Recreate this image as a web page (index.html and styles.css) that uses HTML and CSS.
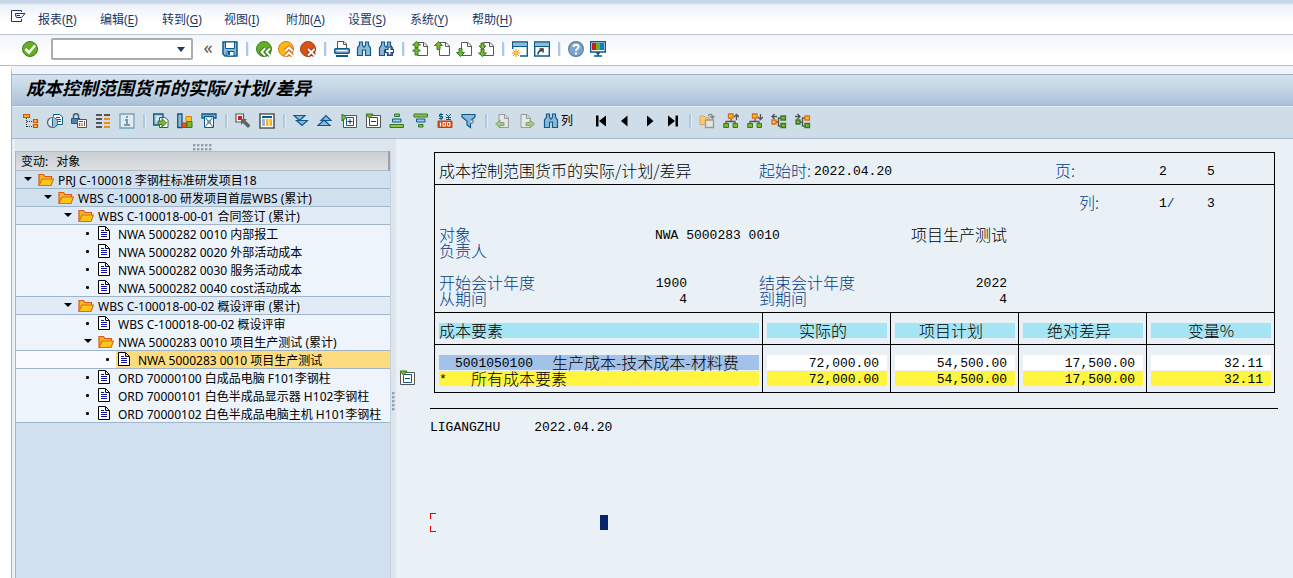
FILE: index.html
```html
<!DOCTYPE html>
<html lang="zh-CN">
<head>
<meta charset="utf-8">
<title>成本控制范围货币的实际/计划/差异</title>
<link rel="stylesheet" href="styles.css">
</head>
<body>
<svg class="sprite" aria-hidden="true">
  <symbol id="i-menu" viewBox="0 0 16 16"><path d="M11.500 3V1.500H1.500V12.500H11.500V10M5.500 4.500H15L11.500 8.500H6.500L5.500 6.500ZM6.500 6.500H10" fill="none" stroke="#1c3667"/></symbol>
  <symbol id="i-ok" viewBox="0 0 16 16"><circle cx="8" cy="8" r="7.500" fill="#69ae22" stroke="#35802a"/><path d="M3.500 8L7 11.500L13 4.500" fill="none" stroke="#fff" stroke-width="2.500"/></symbol>
  <symbol id="i-save" viewBox="0 0 16 16"><path d="M1 1H15V15H3L1 13Z" fill="#8db8da" stroke="#0b5a8c" stroke-width="1.500"/><path d="M3.500 1H12.500V7.500H3.500Z" fill="#fff" stroke="#0b5a8c"/><path d="M5 10.500H12V15H5Z" fill="#fff" stroke="#0b5a8c"/><path d="M6 11H8V14H6Z" fill="#0b5a8c"/></symbol>
  <symbol id="i-back" viewBox="0 0 16 16"><circle cx="8" cy="8" r="7.500" fill="#69ae22" stroke="#35802a"/><path d="M9 7.500L5.500 11L9 14.500M14 7.500L10.500 11L14 14.500" fill="none" stroke="#3b7a25" stroke-width="4"/><path d="M9 7.500L5.500 11L9 14.500M14 7.500L10.500 11L14 14.500" fill="none" stroke="#fff" stroke-width="2"/></symbol>
  <symbol id="i-up" viewBox="0 0 16 16"><circle cx="8" cy="8" r="7.500" fill="#fdb913" stroke="#e07a10"/><path d="M7.500 10L11 6.500L14.500 10M7.500 15L11 11.500L14.500 15" fill="none" stroke="#d9661a" stroke-width="4"/><path d="M7.500 10L11 6.500L14.500 10M7.500 15L11 11.500L14.500 15" fill="none" stroke="#fff" stroke-width="2"/></symbol>
  <symbol id="i-cancel" viewBox="0 0 16 16"><circle cx="8" cy="8" r="7.500" fill="#d8531a" stroke="#b23a15"/><path d="M8 8L14.500 14.500M14.500 8L8 14.500" stroke="#a33414" stroke-width="4"/><path d="M8 8L14.500 14.500M14.500 8L8 14.500" stroke="#fff" stroke-width="2"/></symbol>
  <symbol id="i-print" viewBox="0 0 16 16"><path d="M3.500 7.500V.500H10L12.500 3V7.500M9.500 1V3.500H12" fill="#fff" stroke="#555"/><rect x=".7" y="7.700" width="14.600" height="4.600" rx="1" fill="#9cc1df" stroke="#0b5a8c" stroke-width="1.400"/><path d="M3 9.500H13" stroke="#fff"/><path d="M2 15H14" stroke="#0b5a8c" stroke-width="2"/></symbol>
  <symbol id="i-find" viewBox="0 0 16 16"><path d="M3.500 1H6.500V4L7.500 6H8.500L9.500 4V1H12.500V4L14.500 7V14.500H9.500V9H6.500V14.500H1.500V7L3.500 4Z" fill="#8db8da" stroke="#0b5a8c" stroke-width="1.200"/></symbol>
  <symbol id="i-findnext" viewBox="0 0 16 16"><use href="#i-find"/><path d="M10 6H13V8.500H15.500V11.500H13V14H10V11.500H7.500V8.500H10Z" fill="#fff" stroke="#243e82" stroke-width="1.200"/></symbol>
  <symbol id="page" viewBox="0 0 16 16"><path d="M5.500 1.500H12L15.500 5V14.500H5.500ZM11.500 2V5.500H15" fill="#fff" stroke="#5a5a5a"/></symbol>
  <symbol id="i-first" viewBox="0 0 16 16"><use href="#page"/><path d="M4.500 .5L8.500 4H6V7H3V4H.500ZM4.500 6.500L8.500 10H6V14H3V10H.500Z" fill="#7cb82a" stroke="#34792d"/></symbol>
  <symbol id="i-prev" viewBox="0 0 16 16"><use href="#page"/><path d="M4.500 .5L8.500 4.500H6V8.500H3V4.500H.500Z" fill="#7cb82a" stroke="#34792d"/></symbol>
  <symbol id="i-next" viewBox="0 0 16 16"><use href="#page"/><path d="M4.500 15.500L8.500 11.500H6V7.500H3V11.500H.500Z" fill="#7cb82a" stroke="#34792d"/></symbol>
  <symbol id="i-last" viewBox="0 0 16 16"><use href="#page"/><path d="M4.500 8.500L8 5H6V2H3V5H1ZM4.500 15.500L8.500 12H6V8H3V12H.500Z" fill="#7cb82a" stroke="#34792d"/></symbol>
  <symbol id="i-session" viewBox="0 0 16 16"><path d="M.700 8V1H15.300V15H8" fill="#fff" stroke="#0b5a8c" stroke-width="1.400"/><path d="M1 2H15V5H1Z" fill="#8db8da"/><path d="M1 5.500H15" stroke="#0b5a8c"/><path d="M4 8V16M0 12H8M1 9L7 15M7 9L1 15" stroke="#f28c13"/><circle cx="4" cy="12" r="2" fill="#fdc51c"/></symbol>
  <symbol id="i-shortcut" viewBox="0 0 16 16"><path d="M.700 1H15.300V15H.700Z" fill="#fff" stroke="#0b5a8c" stroke-width="1.400"/><path d="M1.500 2H14.500V5H1.500Z" fill="#8db8da"/><path d="M1 5.500H15" stroke="#0b5a8c"/><path d="M4 13.500C4 11 5 9.500 8 9.500M5.500 8H9V11.500" fill="none" stroke="#333" stroke-width="1.500"/></symbol>
  <symbol id="i-help" viewBox="0 0 16 16"><circle cx="8" cy="8" r="7.400" fill="#7ba6d0" stroke="#5d8098" stroke-width="1.200"/><path d="M5.500 6C5.500 3 10.500 3 10.500 6C10.500 8 8 7.500 8 10M8 11.500V13.500" fill="none" stroke="#fff" stroke-width="2"/></symbol>
  <symbol id="i-monitor" viewBox="0 0 16 16"><path d="M.7 .7H15.300V11H.700Z" fill="#fff" stroke="#0b5a8c" stroke-width="1.400"/><path d="M2 2H6V9H2Z" fill="#d41919"/><path d="M6 2H10V9H6Z" fill="#64b51d"/><path d="M10 2H14V9H10Z" fill="#0a80c4"/><path d="M6 12H10M4 15H12M8 11V15" stroke="#0b5a8c" stroke-width="1.600"/></symbol>
  <symbol id="i-tree" viewBox="0 0 16 16"><path d="M3.500 5V14M4 8.500H10M4 13.500H10" stroke="#333" stroke-dasharray="1 1"/><path d="M.500 1.500H6.500V4.500H.500ZM10.500 6.500H14.500V9.500H10.500ZM10.500 11.500H14.500V14.500H10.500Z" fill="#fdb913" stroke="#cf4d16" stroke-width="1.200"/></symbol>
  <symbol id="i-clockdoc" viewBox="0 0 16 16"><path d="M6.500 3.500V1.500H12.500L15.500 4V11.500H9.500" fill="#fff" stroke="#0b5a8c"/><path d="M9 4.500H13M10 6.500H14M11 8.500H14" stroke="#0b5a8c"/><circle cx="5.500" cy="9.500" r="5" fill="#e2edf5" stroke="#56636c" stroke-width="1.200"/><path d="M5.500 5V14A4.500 4.500 0 0 0 5.500 5" fill="#9abfde"/><path d="M5.500 5.500V13.500" stroke="#225f86"/></symbol>
  <symbol id="i-lock" viewBox="0 0 16 16"><path d="M2.500 5V3C2.500 0 7.500 0 7.500 3V5" fill="none" stroke="#44596a" stroke-width="1.500"/><path d="M.500 5.500H9V10.500H.500Z" fill="#4e81b1" stroke="#24577f"/><path d="M6.500 6.500H15.500V14.500H6.500Z" fill="#fff" stroke="#555"/><path d="M8 8.500H12" stroke="#555"/><path d="M8.500 10V13" stroke="#d94b1a" stroke-width="1.500"/><path d="M11 10V13" stroke="#f6ac18" stroke-width="2"/><path d="M13.500 8V13" stroke="#666"/></symbol>
  <symbol id="i-list" viewBox="0 0 16 16"><path d="M1 1H7V3H1ZM9 1H15V3H9ZM1 5H7V7H1ZM1 9H7V11H1ZM1 13H7V15H1Z" fill="#555"/><path d="M9 5H15V7H9ZM9 9H15V11H9ZM9 13H15V15H9Z" fill="#f58a0b"/></symbol>
  <symbol id="i-info" viewBox="0 0 16 16"><path d="M1 1H15V15H1Z" fill="#e5ebed" stroke="#71a3bb" stroke-width="1.300"/><path d="M7 3H9V5H7ZM6 6H9V11H11V13H5V11H7V8H6Z" fill="#6a9bc0"/></symbol>
  <symbol id="i-export" viewBox="0 0 16 16"><path d="M.700 1H10V12H.700Z" fill="#a9cae2" stroke="#0b5a8c" stroke-width="1.300"/><path d="M3 4H8M3 6H8M3 8H5" stroke="#fff"/><path d="M6.500 4.500H12L15 7V14.500H6.500Z" fill="#fff" stroke="#555"/><path d="M5 8H9V5.500L13.500 10L9 14V11.500H5Z" fill="#7cb82a" stroke="#34792d"/></symbol>
  <symbol id="i-chart" viewBox="0 0 16 16"><path d="M.700 1H5V14.500H.700Z" fill="#8db8da" stroke="#0b5a8c" stroke-width="1.300"/><path d="M5 10H10V14.500H5Z" fill="#db5820" stroke="#b23a15"/><path d="M9 3.500H14.500V9H9Z" fill="#fdc51c" stroke="#e27816"/><path d="M10 8.500H15V14.500H10Z" fill="#7cb82a" stroke="#34792d"/></symbol>
  <symbol id="i-mail" viewBox="0 0 16 16"><path d="M1 1H15V5H1Z" fill="#8db8da" stroke="#0b5a8c" stroke-width="1.300"/><path d="M3.500 3.500H12.500V14.500H3.500Z" fill="#fff" stroke="#0b5a8c"/><path d="M3 3.500H13" stroke="#0b5a8c" stroke-width="1.500"/><path d="M5 5L7 8V10L4.500 13.500M11 5L9 8V10L11.500 13.500M7 8H9M7 10H9" fill="none" stroke="#26668d"/></symbol>
  <symbol id="i-pick" viewBox="0 0 16 16"><path d="M1 1H8.500V9H1Z" fill="#fff" stroke="#555" stroke-width="1.200"/><path d="M3 3H7V7H3Z" fill="#d41919"/><path d="M6 6H12L10.500 7.500L15.500 12.500L13 15L8 10L6 12Z" fill="#636363"/></symbol>
  <symbol id="i-columns" viewBox="0 0 16 16"><path d="M1 1H15V15H1Z" fill="#fff" stroke="#555" stroke-width="1.600"/><path d="M3 3H13V5H3Z" fill="#0b5a8c"/><path d="M3 6H6V13H3Z" fill="#8db8da"/><path d="M7 6H9.500V13H7ZM10.500 6H13V13H10.500Z" fill="#f9b21a"/></symbol>
  <symbol id="i-down2" viewBox="0 0 16 16"><path d="M1 2.500H12L6.500 7.500ZM3.500 7.500H14.500L9 12.500Z" fill="#8db8da" stroke="#0b5a8c" stroke-width="1.200"/></symbol>
  <symbol id="i-up2" viewBox="0 0 16 16"><path d="M4 7.500L9 2.500L14 7.500ZM1 12.500H13L7 7Z" fill="#8db8da" stroke="#0b5a8c" stroke-width="1.200"/></symbol>
  <symbol id="i-expand" viewBox="0 0 16 16"><path d="M2.500 2.500H15.500V14.500H2.500Z" fill="#fff" stroke="#555"/><path d="M5.500 4.500H12.500V12.500H5.500Z" fill="#fff" stroke="#0b5a8c"/><path d="M9 6V11M6.500 8.500H11.500" stroke="#1c3667"/><path d="M1 1L5.500 4.500L1 8Z" fill="#7cb82a" stroke="#34792d"/></symbol>
  <symbol id="i-collapse" viewBox="0 0 16 16"><path d="M1.500 2.500H15.500V14.500H1.500Z" fill="#fff" stroke="#555"/><path d="M4.500 4.500H12.500V12.500H4.500Z" fill="#fff" stroke="#0b5a8c"/><path d="M6 8.500H11" stroke="#1c3667"/><path d="M1 1H8L4.500 5.500Z" fill="#7cb82a" stroke="#34792d"/></symbol>
  <symbol id="i-asc" viewBox="0 0 16 16"><path d="M5.500 1H10.500V3.500H5.500ZM1 11.500H14.500V14.500H1Z" fill="#8bc53f" stroke="#34792d"/><path d="M3.500 6H12V9H3.500Z" fill="#a9cae2" stroke="#0b5a8c"/></symbol>
  <symbol id="i-desc" viewBox="0 0 16 16"><path d="M1 1H14.500V4H1ZM5.500 11.500H10V14H5.500Z" fill="#8bc53f" stroke="#34792d"/><path d="M3.500 6H12V9H3.500Z" fill="#a9cae2" stroke="#0b5a8c"/></symbol>
  <symbol id="i-currency" viewBox="0 0 16 16"><path d="M6 1.500H2.500V3.500H5.500V5.500H2M4 0V7M9 1L11.500 3.500L14 1M11.500 3V7M9 4.500H14M9 6.500H14" fill="none" stroke="#0b5a8c"/><path d="M1 8H15V14.500H1Z" fill="#d9531d" stroke="#c03f13"/><path d="M3.500 9.500V13.500M6 9.500H8.500V13H6ZM10.500 9.500H13V13H10.500Z" fill="none" stroke="#fff"/></symbol>
  <symbol id="i-filter" viewBox="0 0 16 16"><path d="M1 1.500H14V4L9.500 8V14.500L6 12V8L1 4Z" fill="#8db8da" stroke="#0b5a8c" stroke-width="1.200"/><path d="M9 7H12V10H9" fill="#d4e5f0" stroke="#50758b"/></symbol>
  <symbol id="i-docleft" viewBox="0 0 16 16"><path d="M4 1.500H10L13.500 5V14.500H4ZM9.500 2V5.500H13" fill="#e5e7e6" stroke="#999"/><path d="M.7 11L5 7V9.500H9V12.500H5V15Z" fill="#a9c77c" stroke="#82a774"/></symbol>
  <symbol id="i-docright" viewBox="0 0 16 16"><path d="M2 1.500H8L11.500 5V14.500H2ZM7.500 2V5.500H11" fill="#e5e7e6" stroke="#999"/><path d="M15.300 11L11 7V9.500H7V12.500H11V15Z" fill="#a9c77c" stroke="#82a774"/></symbol>
  <symbol id="n-first" viewBox="0 0 16 16"><path d="M3 2.500H5.500V13.500H3ZM13 2.500V13.500L6 8Z"/></symbol>
  <symbol id="n-prev" viewBox="0 0 16 16"><path d="M10.500 2.500V13.500L4 8Z"/></symbol>
  <symbol id="n-next" viewBox="0 0 16 16"><path d="M6 2.500V13.500L12.500 8Z"/></symbol>
  <symbol id="n-last" viewBox="0 0 16 16"><path d="M3 2.500V13.500L10 8ZM10.500 2.500H13V13.500H10.500Z"/></symbol>
  <symbol id="i-paste" viewBox="0 0 16 16"><path d="M1 3H5L6.500 4.500H10V11.500H1Z" fill="#f3cd7c" stroke="#e0a64e"/><path d="M6.500 7H14.500V14.500H6.500Z" fill="#e6e5df" stroke="#999" stroke-width="1.300"/><path d="M9 2.500C11 .500 13.500 1 13.500 4M11 3L13.500 5.500L15.500 3" fill="none" stroke="#888" stroke-width="1.300"/></symbol>
  <symbol id="i-hup" viewBox="0 0 16 16"><path d="M8 6V8.500M3 10V8.500H12V10M13.500 2V7M11 4L13.500 1.500L16 4" fill="none" stroke="#555" stroke-width="1.300"/><path d="M5.500 1H10V5H5.500Z" fill="#fdc51c" stroke="#e06b18" stroke-width="1.300"/><path d="M.700 10.500H5.500V14.500H.700ZM10 10.500H14.500V14.500H10Z" fill="#7cb82a" stroke="#34792d"/></symbol>
  <symbol id="i-hdown" viewBox="0 0 16 16"><path d="M8 6V8.500M3 10V8.500H12V10M13.500 1V6.500M11 4L13.500 6.500L16 4" fill="none" stroke="#555" stroke-width="1.300"/><path d="M5.500 1H10V5H5.500Z" fill="#fdc51c" stroke="#e06b18" stroke-width="1.300"/><path d="M.700 10.500H5.500V14.500H.700ZM10 10.500H14.500V14.500H10Z" fill="#7cb82a" stroke="#34792d"/></symbol>
  <symbol id="i-hleft" viewBox="0 0 16 16"><path d="M5 9H7.500M10 5H7.500V13H10M6 3.500H1M3.500 1L1 3.500L3.500 6" fill="none" stroke="#555" stroke-width="1.300"/><path d="M1 7H5V11H1Z" fill="#fdc51c" stroke="#e06b18" stroke-width="1.300"/><path d="M10 3H14.500V7H10ZM10 10.500H14.500V14.500H10Z" fill="#7cb82a" stroke="#34792d" stroke-width="1.300"/></symbol>
  <symbol id="i-hright" viewBox="0 0 16 16"><path d="M5 9H7.500M10 5H7.500V13H10M0 3.500H5M2.500 1L5 3.500L2.500 6" fill="none" stroke="#555" stroke-width="1.300"/><path d="M10 3H14.500V7H10Z" fill="#fdc51c" stroke="#e06b18" stroke-width="1.300"/><path d="M1 7H5V11H1ZM10 10.500H14.500V14.500H10Z" fill="#7cb82a" stroke="#34792d" stroke-width="1.300"/></symbol>
  <symbol id="t-folder" viewBox="0 0 16 16"><path d="M1 13.500V2.500H5.500L7 4.500H13.500V7" fill="#fdb913" stroke="#d7581a" stroke-width="1.200"/><path d="M1 13.500L4 7H15.500L13 13.500Z" fill="#fdc51c" stroke="#d7701a" stroke-width="1.200"/></symbol>
  <symbol id="t-doc" viewBox="0 0 16 16"><path d="M.500 .500H7.500L11.500 4.500V13.500H.500ZM7.500 1V4.500H11" fill="#fff" stroke="#000"/><path d="M3 4.500H6M3 6.500H9M3 8.500H9M3 10.500H9" stroke="#1010a0"/></symbol>
</svg>

<nav class="menubar" aria-label="主菜单">
  <button class="menu-icon" aria-label="菜单"><svg><use href="#i-menu"/></svg></button>
  <button>报表(<u>R</u>)</button>
  <button>编辑(<u>E</u>)</button>
  <button>转到(<u>G</u>)</button>
  <button>视图(<u>I</u>)</button>
  <button>附加(<u>A</u>)</button>
  <button>设置(<u>S</u>)</button>
  <button>系统(<u>Y</u>)</button>
  <button>帮助(<u>H</u>)</button>
</nav>

<div class="stdbar" role="toolbar" aria-label="标准工具栏">
  <button aria-label="回车"><svg><use href="#i-ok"/></svg></button>
  <div class="command">
    <input type="text" aria-label="命令">
    <button aria-label="命令历史"><span class="caret"></span></button>
  </div>
  <button class="chevrons" aria-label="隐藏命令字段">«</button>
  <button aria-label="保存"><svg><use href="#i-save"/></svg></button>
  <span class="sep"></span>
  <button aria-label="返回"><svg><use href="#i-back"/></svg></button>
  <button aria-label="退出"><svg><use href="#i-up"/></svg></button>
  <button aria-label="取消"><svg><use href="#i-cancel"/></svg></button>
  <span class="sep"></span>
  <button aria-label="打印"><svg><use href="#i-print"/></svg></button>
  <button aria-label="查找"><svg><use href="#i-find"/></svg></button>
  <button aria-label="继续查找"><svg><use href="#i-findnext"/></svg></button>
  <span class="sep"></span>
  <button aria-label="首页"><svg><use href="#i-first"/></svg></button>
  <button aria-label="上一页"><svg><use href="#i-prev"/></svg></button>
  <button aria-label="下一页"><svg><use href="#i-next"/></svg></button>
  <button aria-label="末页"><svg><use href="#i-last"/></svg></button>
  <span class="sep"></span>
  <button aria-label="新建会话"><svg><use href="#i-session"/></svg></button>
  <button aria-label="快捷方式"><svg><use href="#i-shortcut"/></svg></button>
  <span class="sep"></span>
  <button aria-label="帮助"><svg><use href="#i-help"/></svg></button>
  <button aria-label="布局"><svg><use href="#i-monitor"/></svg></button>
</div>

<main class="frame">
  <h1 class="title">成本控制范围货币的实际/计划/差异</h1>

  <div class="appbar" role="toolbar" aria-label="应用工具栏">
    <button aria-label="层次"><svg><use href="#i-tree"/></svg></button>
    <button aria-label="期间"><svg><use href="#i-clockdoc"/></svg></button>
    <button aria-label="锁定"><svg><use href="#i-lock"/></svg></button>
    <button aria-label="列表"><svg><use href="#i-list"/></svg></button>
    <button aria-label="信息"><svg><use href="#i-info"/></svg></button>
    <span class="sep"></span>
    <button aria-label="导出"><svg><use href="#i-export"/></svg></button>
    <button aria-label="图形"><svg><use href="#i-chart"/></svg></button>
    <button aria-label="发送"><svg><use href="#i-mail"/></svg></button>
    <span class="sep"></span>
    <button aria-label="选择"><svg><use href="#i-pick"/></svg></button>
    <button aria-label="列设置"><svg><use href="#i-columns"/></svg></button>
    <span class="sep"></span>
    <button aria-label="向下"><svg><use href="#i-down2"/></svg></button>
    <button aria-label="向上"><svg><use href="#i-up2"/></svg></button>
    <button aria-label="展开"><svg><use href="#i-expand"/></svg></button>
    <button aria-label="折叠"><svg><use href="#i-collapse"/></svg></button>
    <button aria-label="升序"><svg><use href="#i-asc"/></svg></button>
    <button aria-label="降序"><svg><use href="#i-desc"/></svg></button>
    <button aria-label="货币"><svg><use href="#i-currency"/></svg></button>
    <button aria-label="过滤"><svg><use href="#i-filter"/></svg></button>
    <span class="sep"></span>
    <button aria-label="上一文档"><svg><use href="#i-docleft"/></svg></button>
    <button aria-label="下一文档"><svg><use href="#i-docright"/></svg></button>
    <button class="labelled"><svg><use href="#i-find"/></svg>列</button>
    <button aria-label="第一列"><svg><use href="#n-first"/></svg></button>
    <button aria-label="前一列"><svg><use href="#n-prev"/></svg></button>
    <button aria-label="后一列"><svg><use href="#n-next"/></svg></button>
    <button aria-label="最后一列"><svg><use href="#n-last"/></svg></button>
    <span class="sep"></span>
    <button aria-label="复制"><svg><use href="#i-paste"/></svg></button>
    <button aria-label="上级"><svg><use href="#i-hup"/></svg></button>
    <button aria-label="下级"><svg><use href="#i-hdown"/></svg></button>
    <button aria-label="左侧"><svg><use href="#i-hleft"/></svg></button>
    <button aria-label="右侧"><svg><use href="#i-hright"/></svg></button>
  </div>

  <div class="body">
    <aside class="navigator">
      <div class="grip"><span class="dots"></span></div>
      <div class="tree-panel">
        <div class="tree-head"><span>变动:</span><span>对象</span></div>
        <ul class="tree" role="tree">
          <li class="l0 dark line" role="treeitem"><span class="toggle open"></span><span class="node"><svg><use href="#t-folder"/></svg>PRJ C-100018 李钢柱标准研发项目18</span></li>
          <li class="l1 dark line" role="treeitem"><span class="toggle open"></span><span class="node"><svg><use href="#t-folder"/></svg>WBS C-100018-00 研发项目首层WBS (累计)</span></li>
          <li class="l2 mid line" role="treeitem"><span class="toggle open"></span><span class="node"><svg><use href="#t-folder"/></svg>WBS C-100018-00-01 合同签订 (累计)</span></li>
          <li class="l3" role="treeitem"><span class="toggle leaf"></span><span class="node"><svg><use href="#t-doc"/></svg>NWA 5000282 0010 内部报工</span></li>
          <li class="l3" role="treeitem"><span class="toggle leaf"></span><span class="node"><svg><use href="#t-doc"/></svg>NWA 5000282 0020 外部活动成本</span></li>
          <li class="l3" role="treeitem"><span class="toggle leaf"></span><span class="node"><svg><use href="#t-doc"/></svg>NWA 5000282 0030 服务活动成本</span></li>
          <li class="l3 line" role="treeitem"><span class="toggle leaf"></span><span class="node"><svg><use href="#t-doc"/></svg>NWA 5000282 0040 cost活动成本</span></li>
          <li class="l2 mid line" role="treeitem"><span class="toggle open"></span><span class="node"><svg><use href="#t-folder"/></svg>WBS C-100018-00-02 概设评审 (累计)</span></li>
          <li class="l3" role="treeitem"><span class="toggle leaf"></span><span class="node"><svg><use href="#t-doc"/></svg>WBS C-100018-00-02 概设评审</span></li>
          <li class="l3 line" role="treeitem"><span class="toggle open"></span><span class="node"><svg><use href="#t-folder"/></svg>NWA 5000283 0010 项目生产测试 (累计)</span></li>
          <li class="l4 line selected" role="treeitem" aria-selected="true"><span class="toggle leaf"></span><span class="node"><svg><use href="#t-doc"/></svg>NWA 5000283 0010 项目生产测试</span></li>
          <li class="l3" role="treeitem"><span class="toggle leaf"></span><span class="node"><svg><use href="#t-doc"/></svg>ORD 70000100 白成品电脑 F101李钢柱</span></li>
          <li class="l3" role="treeitem"><span class="toggle leaf"></span><span class="node"><svg><use href="#t-doc"/></svg>ORD 70000101 白色半成品显示器 H102李钢柱</span></li>
          <li class="l3 line" role="treeitem"><span class="toggle leaf"></span><span class="node"><svg><use href="#t-doc"/></svg>ORD 70000102 白色半成品电脑主机 H101李钢柱</span></li>
        </ul>
      </div>
    </aside>
    <div class="splitter"><span class="dots tall"></span></div>

    <section class="report">
      <div class="gutter"><button aria-label="折叠行"><svg><use href="#i-collapse"/></svg></button></div>
      <div class="sheet">
        <div class="box">
          <div class="info caption">
            <span class="span2">成本控制范围货币的实际/计划/差异</span>
            <span class="c3 start"><span class="label">起始时:</span><span class="mono">2022.04.20</span></span>
            <span class="label c5">页:</span>
            <span class="mono">2</span>
            <span class="mono">5</span>
          </div>
          <div class="info details">
            <span class="label c5 shift">列:</span>
            <span class="mono">1<span class="label">/</span></span>
            <span class="mono">3</span>
            <span class="blank"></span>
            <span class="label c1">对象</span>
            <span class="mono span2">NWA 5000283 0010</span>
            <span class="c4">项目生产测试</span>
            <span class="label c1">负责人</span>
            <span class="blank"></span>
            <span class="label c1">开始会计年度</span>
            <span class="mono from">1900</span>
            <span class="label">结束会计年度</span>
            <span class="mono to">2022</span>
            <span class="label c1">从期间</span>
            <span class="mono from">4</span>
            <span class="label">到期间</span>
            <span class="mono to">4</span>
          </div>
          <table class="costs">
            <colgroup><col><col class="amount"><col class="amount"><col class="amount"><col class="amount"></colgroup>
            <thead>
              <tr>
                <th class="element"><span>成本要素</span></th>
                <th class="money"><span>实际的</span></th>
                <th class="money"><span>项目计划</span></th>
                <th class="money"><span>绝对差异</span></th>
                <th><span>变量%</span></th>
              </tr>
            </thead>
            <tbody>
              <tr class="item">
                <td class="element"><span><i class="mono">5001050100</i>生产成本-技术成本-材料费</span></td>
                <td><span class="mono">72,000.00</span></td>
                <td><span class="mono">54,500.00</span></td>
                <td><span class="mono">17,500.00</span></td>
                <td><span class="mono">32.11</span></td>
              </tr>
              <tr class="total">
                <td class="element"><span><i class="mono">*</i>所有成本要素</span></td>
                <td><span class="mono">72,000.00</span></td>
                <td><span class="mono">54,500.00</span></td>
                <td><span class="mono">17,500.00</span></td>
                <td><span class="mono">32.11</span></td>
              </tr>
            </tbody>
          </table>
        </div>
        <footer class="signature mono"><span>LIGANGZHU</span><span>2022.04.20</span></footer>
        <div class="entry"><span class="bracket"></span><span class="cursor"></span></div>
      </div>
    </section>
  </div>
</main>
</body>
</html>
```
FILE: styles.css
```css
* { box-sizing: border-box; }

body {
  margin: 0;
  min-height: 100vh;
  display: flex;
  flex-direction: column;
  background: #fff;
  color: #000;
  font: 12px/18px "Noto Sans", "Noto Sans CJK SC", sans-serif;
}

.sprite { position: absolute; width: 0; height: 0; }

svg { width: 16px; height: 16px; flex: none; display: block; }

button {
  display: flex;
  align-items: center;
  justify-content: center;
  padding: 0;
  border: 0;
  background: none;
  color: inherit;
  font: inherit;
}

/* Menu and standard toolbar */
.menubar {
  display: flex;
  align-items: center;
  gap: 20px;
  height: 35px;
  padding: 6px 10px 0;
  border-bottom: 1px solid #bfc7d1;
  background: linear-gradient(#c9d7ea 0, #c9d7ea 3px, #edf2f9 5px, #fff 22px);
  color: #1c3667;
}

.menubar button { min-width: 42px; justify-content: flex-start; }
.menubar .menu-icon { min-width: 16px; margin-right: -8px; padding-bottom: 6px; }
.menubar u { text-underline-offset: 2px; }

.stdbar {
  display: flex;
  align-items: center;
  height: 31px;
  padding: 0 19px 2px;
  border-bottom: 1px solid #b9bec5;
  background: linear-gradient(#f1f5f9, #fff 20px);
}

.stdbar > button { width: 22px; height: 22px; }

.command {
  display: flex;
  width: 142px;
  height: 22px;
  margin: 0 4px 0 10px;
  border: 2px solid #a9adb1;
  border-radius: 2px;
  background: #fff;
}

.command input { flex: 1; min-width: 0; border: 0; padding: 0 4px; background: none; font: inherit; }
.command button { width: 20px; }
.caret { border: 4px solid transparent; border-top: 5px solid #1c3667; border-bottom: 0; }
.stdbar .chevrons { color: #555; font-size: 18px; padding-bottom: 4px; }

.sep { flex: none; width: 12px; height: 14px; display: flex; justify-content: center; }
.sep::before { content: ""; width: 2px; background: #b0c7de; border-right: 1px solid #e4edf5; }

/* Window frame */
.frame {
  flex: 1;
  display: flex;
  flex-direction: column;
  margin: 0 0 0 11px;
  border-left: 1px solid #a3b6cb;
  border-top: 8px solid #f1f4f9;
  background: #e9f0f6;
  min-width: 0;
}

.title {
  margin: 0;
  height: 32px;
  padding-left: 14px;
  border-top: 1px solid #9aafc7;
  border-bottom: 1px solid #a3b8cd;
  background: linear-gradient(#d3e2ee, #c2d4e3 50%, #abc1da);
  font: italic bold 18px/26px "Noto Sans", "Noto Sans CJK SC", sans-serif;
  white-space: nowrap;
}

.appbar {
  display: flex;
  align-items: center;
  height: 33px;
  padding: 0 7px 4px;
  border-top: 1px solid #e4edf5;
  border-bottom: 1px solid #a7b7cb;
  background: #cfdde8;
}

.appbar button { width: 24px; height: 24px; }
.appbar .sep { width: 10px; }
.appbar .labelled { width: 38px; margin-right: 12px; gap: 2px; }

.body { flex: 1; display: flex; min-height: 0; }

/* Object navigator */
.navigator { flex: none; width: 379px; padding-left: 3px; display: flex; flex-direction: column; }

.grip {
  height: 12px;
  display: flex;
  align-items: center;
  justify-content: center;
  padding-top: 4px;
  background: #dce6ec;
}

.dots {
  width: 20px;
  height: 7px;
  background: radial-gradient(circle at 1px 1px, #929eaa 1px, transparent 2px) 0 0 / 4px 4px;
}

.dots.tall { width: 3px; height: 20px; }

.tree-panel {
  flex: 1;
  border-left: 1px solid #a3b6cb;
  border-right: 1px solid #c4d1de;
  background: #d1e0ee;
}

.tree-head {
  display: flex;
  gap: 8px;
  height: 20px;
  padding-left: 5px;
  border: 1px solid #b3bac1;
  border-left: 0;
  border-right: 2px solid #9aa1a8;
  background: linear-gradient(#c9ced3, #dde0e3);
  line-height: 20px;
}

.tree { margin: 0; padding: 0; list-style: none; }
.tree li { display: flex; height: 18px; background: #edf4fc; white-space: nowrap; border-bottom: 1px solid transparent; }
.tree li.dark { background-color: #d1e0ee; }
.tree li.mid { background-color: #e1ebf7; }
.tree li.line { border-bottom-color: #9fb5cb; }
.tree li.selected { background-color: #f8fbff; }

.tree .l0 { padding-left: 8px; }
.tree .l1 { padding-left: 28px; }
.tree .l2 { padding-left: 48px; }
.tree .l3 { padding-left: 68px; }
.tree .l4 { padding-left: 88px; }

.toggle { flex: none; width: 12px; padding-top: 6px; }
.toggle::before { content: ""; display: block; width: 0; }
.toggle.open::before { border: 4px solid transparent; border-top-color: #000; border-bottom: 0; }
.toggle.leaf::before { width: 3px; height: 3px; margin: 1px 0 0 2px; border-radius: 1px; background: #111; }
.node { flex: 1; display: flex; gap: 4px; padding: 1px 0 0 2px; line-height: 18px; }
.selected .node { background: #fddb7f; }

.splitter { flex: none; width: 5px; display: flex; align-items: center; justify-content: center; padding-top: 86px; background: #dce6ec; }

/* Report */
.report {
  flex: 1;
  min-width: 0;
  display: flex;
  padding: 13px 15px 0 0;
  font: 16px/16px "Noto Sans CJK SC", sans-serif;
}

.gutter { flex: none; width: 34px; padding: 218px 0 0 3px; }
.sheet { flex: 1; min-width: 0; }
.box { margin: 0 3px 0 4px; border: 1px solid #000; }
.label { color: #003c86; }
.mono { font-family: "Liberation Mono", monospace; font-size: 13px; font-style: normal; }

.info {
  display: grid;
  grid-template-columns: 216fr 104fr 152fr 144fr 104fr 48fr 67fr;
  grid-auto-rows: 16px;
  padding: 9px 0 6px 4px;
  font-weight: 300;
  white-space: nowrap;
}

.info .mono { line-height: 20px; }
.caption { border-bottom: 1px solid #000; }
.c1 { grid-column-start: 1; }
.c3 { grid-column: 3 / span 2; }
.c4 { grid-column-start: 4; }
.c5 { grid-column-start: 5; }
.span2 { grid-column-end: span 2; }
.start { display: flex; gap: 3px; }
.shift { padding-left: 24px; }
.blank { grid-column: 1 / -1; }
.from { text-align: right; padding-right: 72px; }
.to { text-align: right; padding-right: 48px; }

.costs { width: 100%; table-layout: fixed; border-spacing: 0; font-weight: 300; }
.costs .amount { width: 128px; }
.costs th, .costs td { padding: 0 3px 1px 4px; border-left: 1px solid #000; font-weight: 300; text-align: right; }
.costs .element { padding-left: 4px; border-left: 0; text-align: left; }
.costs th { padding-top: 10px; padding-bottom: 6px; border-top: 1px solid #000; border-bottom: 1px solid #000; text-align: center; }
.costs span { display: block; height: 15px; line-height: 15px; white-space: nowrap; }
.costs th span { background: #a5e5f3; }
.costs .money span { padding-right: 8px; }
.costs td .mono { padding-right: 8px; line-height: 17px; }
.costs .element span { display: flex; padding-right: 0; }
.costs i { padding-right: 0; }
.item td { padding-top: 10px; }
.item span { background: #fff; }
.item .element span { background: #a3c2ea; padding-left: 16px; }
.item i { width: 97px; }
.total td { padding-bottom: 6px; }
.total span { background: #fff540; }
.total i { width: 32px; }

.signature {
  display: flex;
  gap: 34px;
  margin-top: 15px;
  padding-top: 11px;
  border-top: 1px solid #000;
  line-height: 16px;
}

.entry { display: flex; align-items: center; gap: 164px; margin-top: 77px; }

.bracket {
  width: 6px;
  height: 19px;
  background:
    linear-gradient(#e00000, #e00000) 0 0 / 6px 1px no-repeat,
    linear-gradient(#e00000, #e00000) 0 0 / 1px 6px no-repeat,
    linear-gradient(#e00000, #e00000) 0 100% / 1px 6px no-repeat,
    linear-gradient(#e00000, #e00000) 0 100% / 6px 1px no-repeat;
}

.cursor { width: 8px; height: 15px; background: #08246b; }
```
